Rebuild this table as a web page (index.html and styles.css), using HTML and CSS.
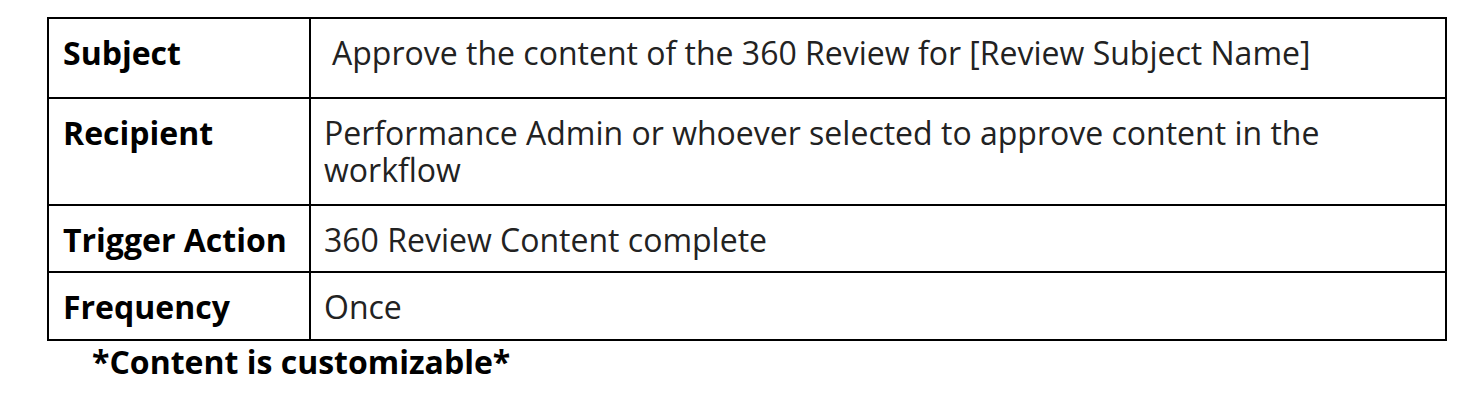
FILE: index.html
```html
<!DOCTYPE html>
<html lang="en">
<head>
<meta charset="utf-8">
<title>Notification</title>
<link rel="stylesheet" href="styles.css">
</head>
<body>
<div class="page">
  <table class="info">
    <tr class="r1">
      <th>Subject</th>
      <td class="subject">Approve the content of the 360 Review for [Review Subject Name]</td>
    </tr>
    <tr class="r2">
      <th>Recipient</th>
      <td>Performance Admin or whoever selected to approve content in the workflow</td>
    </tr>
    <tr class="r3">
      <th>Trigger Action</th>
      <td>360 Review Content complete</td>
    </tr>
    <tr class="r4">
      <th>Frequency</th>
      <td>Once</td>
    </tr>
  </table>
  <p class="note">*Content is customizable*</p>
</div>
</body>
</html>
```
FILE: styles.css
```css
html, body {
  margin: 0;
  padding: 0;
  background: #ffffff;
}
.page {
  padding: 17px 0 0 47px;
  font-family: "Open Sans", "Liberation Sans", sans-serif;
}
.info {
  border-collapse: collapse;
  width: 1400px;
  table-layout: fixed;
}
.info th, .info td {
  border: 2px solid #000;
  font-size: 32px;
  line-height: 37px;
  vertical-align: top;
  text-align: left;
  padding: 15px 12px 0 14px;
  box-sizing: border-box;
}
.info th {
  width: 262px;
  font-weight: 700;
  color: #000;
}
.info td {
  color: #222;
  font-weight: 400;
  padding-left: 13px;
}
.info td.subject {
  padding-left: 21px;
}
.r1 th, .r1 td { height: 80px; }
.r2 th, .r2 td { height: 107px; }
.r3 th, .r3 td { height: 67px; }
.r4 th, .r4 td { height: 68px; }
.note {
  margin: 0;
  padding-left: 45px;
  font-size: 32px;
  line-height: 42px;
  font-weight: 700;
  color: #000;
}
```
